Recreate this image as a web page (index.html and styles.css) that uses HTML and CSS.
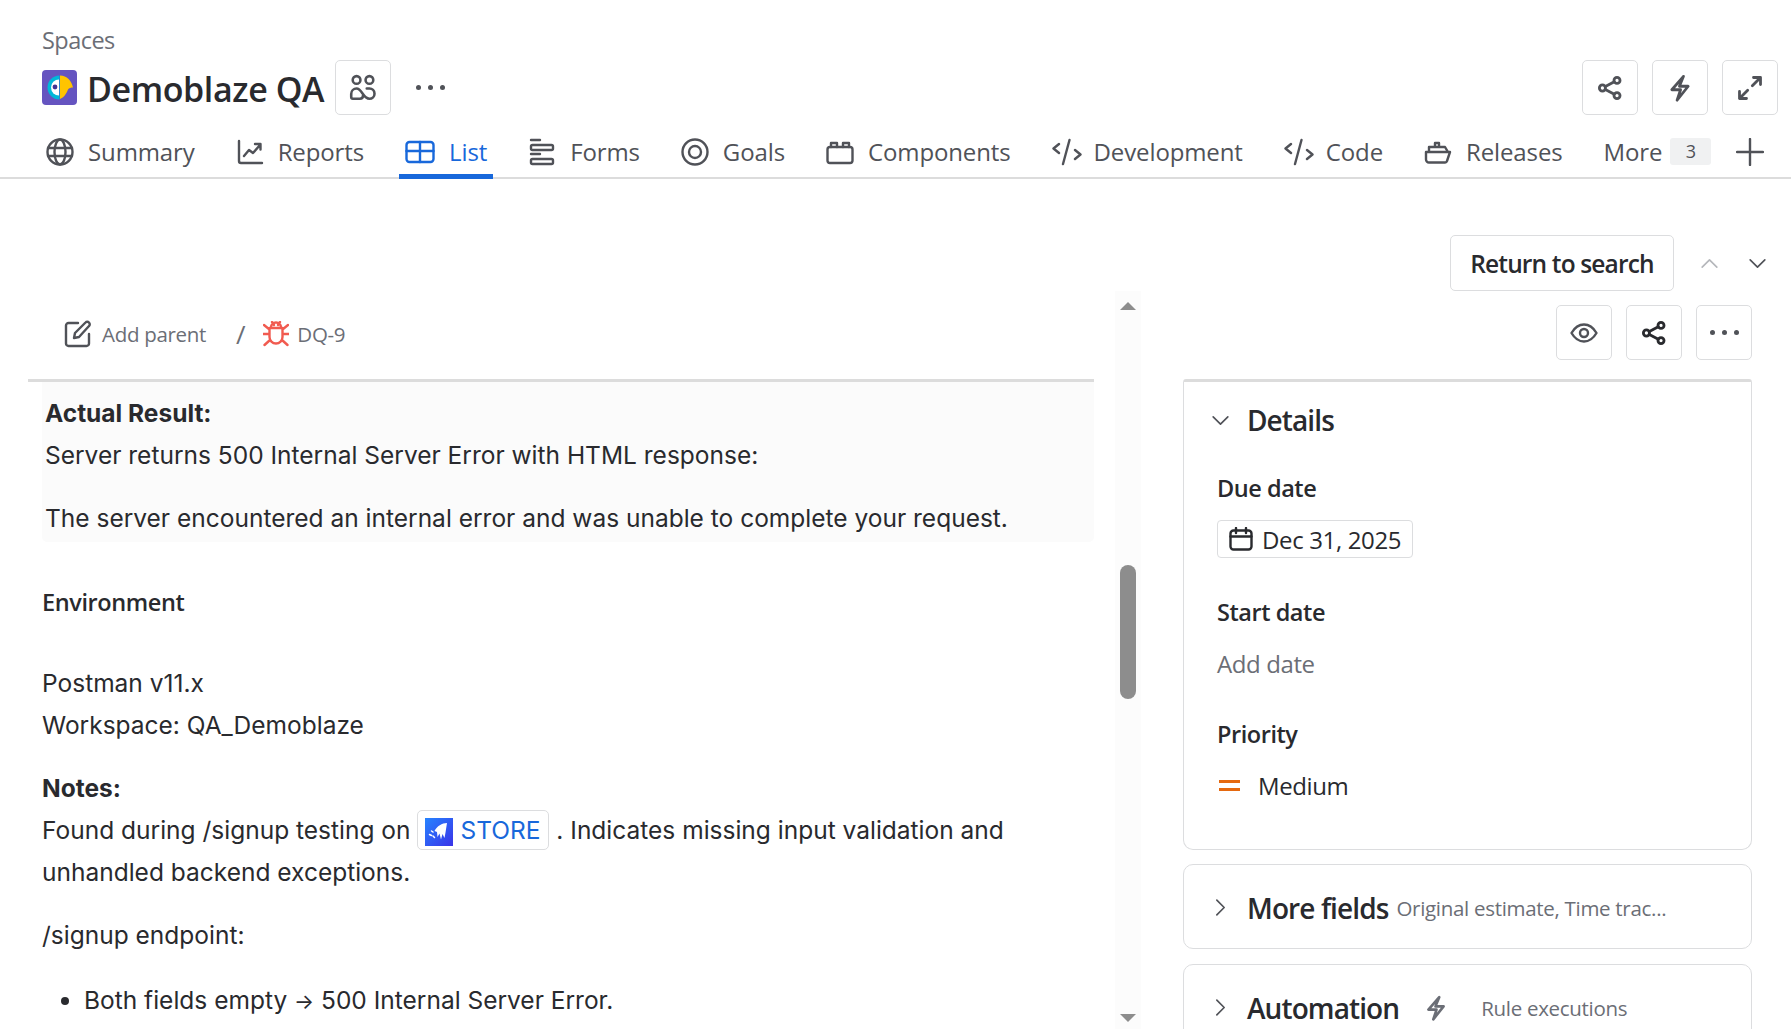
FILE: index.html
```html
<!DOCTYPE html>
<html lang="en">
<head>
  <meta charset="UTF-8" />
  <meta name="viewport" content="width=device-width, initial-scale=1.0"/>
  <title>Demoblaze QA</title>
  <link rel="stylesheet" href="styles.css">
</head>
<body>
  <svg class="defs" width="0" height="0">
    <symbol id="i-share" viewBox="0 0 24 24"><circle cx="5.5" cy="12" r="2.600"/><circle cx="18" cy="5.5" r="2.600"/><circle cx="18" cy="18.5" r="2.600"/><path d="M8 10.700l7.700-4M8 13.300l7.700 4"/></symbol>
    <symbol id="i-bolt" viewBox="0 0 24 24"><path d="M15 2L5 13.500h7.500L9.500 22.500 19 10.500h-7.500z"/></symbol>
  </svg>

  <header class="top">
    <div class="crumb">Spaces</div>
    <div class="title-row">
      <svg class="logo" viewBox="0 0 35 35">
        <rect width="35" height="35" rx="4" fill="#6554c0"/>
        <path d="M17.500 5.500a12 12 0 0 0 0 24z" fill="#00b8d9"/>
        <path d="M17 9.500a8 8 0 0 0 0 16z" fill="#fff"/>
        <circle cx="13" cy="17" r="2.400" fill="#403294"/>
        <path d="M18 5.500c7 0 11.500 5 13 12-2 0-4 .5-5 2-1.500 4-4 8-8 9.500z" fill="#ffc400"/>
      </svg>
      <h1>Demoblaze QA</h1>
      <button class="icon-btn people">
        <svg viewBox="0 0 28 28"><circle cx="8" cy="6.500" r="3.600"/><circle cx="20" cy="6.500" r="3.600"/><path d="M8 14.500a5 5 0 0 0-5 5v3a1.500 1.500 0 0 0 1.500 1.500h6.500c2 0 3-1.500 3-3M8 14.500c5 0 6 9.500 12 9.500a4.750 4.750 0 0 0 0-9.500h-2.500"/></svg>
      </button>
      <div class="dots"><i></i><i></i><i></i></div>
      <div class="title-actions">
        <button class="icon-btn"><svg viewBox="0 0 24 24"><use href="#i-share"/></svg></button>
        <button class="icon-btn"><svg viewBox="0 0 24 24"><use href="#i-bolt"/></svg></button>
        <button class="icon-btn"><svg viewBox="0 0 24 24"><path d="M14 10l7-7M15 3h6v6M10 14l-7 7M3 15v6h6"/></svg></button>
      </div>
    </div>
    <nav class="tabs">
      <a class="tab"><svg viewBox="0 0 28 28"><circle cx="14" cy="14" r="12.500"/><ellipse cx="14" cy="14" rx="5.500" ry="12.500"/><path d="M2 10h24M2 18h24"/></svg>Summary</a>
      <a class="tab"><svg viewBox="0 0 28 28"><path d="M3 3v20a2 2 0 0 0 2 2h21M8 18l5-6 4 3 7-8M19 6h5.500v5.500"/></svg>Reports</a>
      <a class="tab active"><svg class="wide" viewBox="0 0 30 28"><rect x="1.500" y="4" width="27" height="20" rx="3"/><path d="M1.500 13h27M15 4v20"/></svg>List</a>
      <a class="tab"><svg viewBox="0 0 28 28"><path d="M3 2h9"/><rect x="3" y="7" width="22" height="5" rx="1.500"/><path d="M3 16h9"/><rect x="3" y="21" width="22" height="5" rx="1.500"/></svg>Forms</a>
      <a class="tab"><svg viewBox="0 0 28 28"><circle cx="14" cy="14" r="12.500"/><circle cx="14" cy="14" r="6"/></svg>Goals</a>
      <a class="tab"><svg viewBox="0 0 28 28"><rect x="1.500" y="9" width="25" height="16" rx="2.500"/><path d="M5 9V5h6v4M17 9V5h6v4"/></svg>Components</a>
      <a class="tab code"><svg class="wide" viewBox="0 0 30 28"><path d="M7 6L1.500 10.500 7 15M23 12l5.500 4.500L23 21M17.500 2L11 26"/></svg>Development</a>
      <a class="tab code"><svg class="wide" viewBox="0 0 30 28"><path d="M7 6L1.500 10.500 7 15M23 12l5.500 4.500L23 21M17.500 2L11 26"/></svg>Code</a>
      <a class="tab"><svg viewBox="0 0 28 28"><path d="M2 14h24l-3 9a2 2 0 0 1-2 1.500H5a3 3 0 0 1-3-3zM5 14V9h16l3 5M11 9V5h4v4"/></svg>Releases</a>
      <a class="tab more">More<span class="count">3</span></a>
      <a class="plus"><svg viewBox="0 0 28 28"><path d="M14 1v26M1 14h26"/></svg></a>
    </nav>
  </header>

  <div class="issue-bar">
    <button class="return-btn">Return to search</button>
    <svg class="chev up" viewBox="0 0 20 12"><path d="M2 10l8-8 8 8"/></svg>
    <svg class="chev" viewBox="0 0 20 12"><path d="M2 2l8 8 8-8"/></svg>
  </div>

  <main class="issue">
    <section class="issue-main">
      <div class="issue-crumbs">
        <svg class="edit" viewBox="0 0 28 28"><path d="M14 3H4.500A2.500 2.500 0 0 0 2 5.500v18A2.500 2.500 0 0 0 4.500 26h18a2.500 2.500 0 0 0 2.500-2.500V14"/><path d="M10 18l1-5L21.500 2.500a2.400 2.400 0 0 1 3.500 0 2.400 2.400 0 0 1 0 3.500L15 17z"/></svg>
        <span>Add parent</span>
        <span class="slash">/</span>
        <svg class="bug" viewBox="0 0 26 26"><path d="M8 6.500a5 5 0 0 1 10 0M6.500 7h13v9a6.500 6.500 0 0 1-13 0zM9 1l2 3M17 1l-2 3M1 4l5.500 4.500M25 4l-5.500 4.500M0.500 13h6M25.500 13h-6M1.500 24l5.500-5M24.500 24l-5.500-5"/></svg>
        <span>DQ-9</span>
      </div>
      <div class="content">
        <div class="panel">
          <p><strong>Actual Result:</strong><br>Server returns 500 Internal Server Error with HTML response:</p>
          <p>The server encountered an internal error and was unable to complete your request.</p>
        </div>
        <h2>Environment</h2>
        <p>Postman v11.x<br>Workspace: QA_Demoblaze</p>
        <p><strong>Notes:</strong><br>Found during /signup testing on
          <a class="chip"><svg viewBox="0 0 28 28"><defs><linearGradient id="store" x1="0" y1="0" x2="1" y2="1"><stop offset="0" stop-color="#2684ff"/><stop offset="1" stop-color="#3a33e8"/></linearGradient></defs><rect width="28" height="28" fill="url(#store)"/><path d="M22 5c-5 0-10 3-12.500 8l2.500 1 .5 5 2-3.500 1.500 6 1.500-5.500 2 4 1-5.500z" fill="#fff"/><path d="M6.500 13l1.500 1M4.500 16.500l2 1M8 18l1.500 1.500" stroke="#fff" stroke-width="1.500"/></svg>STORE</a>
          . Indicates missing input validation and<br>unhandled backend exceptions.</p>
        <p>/signup endpoint:</p>
        <ul>
          <li>Both fields empty <span class="to">→</span> 500 Internal Server Error.</li>
        </ul>
      </div>
    </section>

    <div class="scroll">
      <span class="arrow up-arrow"></span>
      <span class="thumb"></span>
      <span class="arrow down-arrow"></span>
    </div>

    <aside class="issue-side">
      <div class="side-actions">
        <button class="icon-btn"><svg viewBox="0 0 28 28"><path d="M1.500 14C5 8 9 5.500 14 5.500S23 8 26.500 14C23 20 19 22.500 14 22.500S5 20 1.500 14z"/><circle cx="14" cy="14" r="4"/></svg></button>
        <button class="icon-btn dark"><svg viewBox="0 0 24 24"><use href="#i-share"/></svg></button>
        <button class="icon-btn"><div class="dots"><i></i><i></i><i></i></div></button>
      </div>

      <div class="card details">
        <div class="card-head">
          <svg class="fold" viewBox="0 0 20 12"><path d="M2 2l8 8 8-8"/></svg>
          <h3>Details</h3>
        </div>
        <div class="field">
          <label>Due date</label>
          <div class="date"><svg viewBox="0 0 24 24"><rect x="1.500" y="3.500" width="21" height="19" rx="3"/><path d="M1.500 9.500h21M7 1v5M17 1v5"/></svg>Dec 31, 2025</div>
        </div>
        <div class="field">
          <label>Start date</label>
          <div class="value muted">Add date</div>
        </div>
        <div class="field">
          <label>Priority</label>
          <div class="value"><span class="prio"></span>Medium</div>
        </div>
      </div>

      <div class="card fold-card">
        <svg class="fold right" viewBox="0 0 12 20"><path d="M2 2l8 8-8 8"/></svg>
        <h3>More fields</h3>
        <span class="hint">Original estimate, Time trac...</span>
      </div>

      <div class="card fold-card auto">
        <svg class="fold right" viewBox="0 0 12 20"><path d="M2 2l8 8-8 8"/></svg>
        <h3>Automation</h3>
        <svg class="auto-bolt" viewBox="0 0 24 24"><use href="#i-bolt"/></svg>
        <span class="hint">Rule executions</span>
      </div>
    </aside>
  </main>
</body>
</html>
```

FILE: styles.css
```css
html, body {
  height: 100%;
}
body {
  margin: 0;
  height: 1029px;
  overflow: hidden;
  background: #fff;
  color: #292a2e;
  font-family: 'Open Sans', 'Noto Sans', sans-serif;
}
.defs {
  position: absolute;
}
svg {
  fill: none;
  stroke: currentColor;
  stroke-width: 2.4;
  stroke-linecap: round;
  stroke-linejoin: round;
  display: block;
  flex-shrink: 0;
}
symbol {
  overflow: visible;
}
button {
  font-family: inherit;
  background: #fff;
  border: 1px solid #dcdddf;
  border-radius: 5px;
  padding: 0;
}

/* top header */
.top {
  padding-top: 24px;
  border-bottom: 2px solid #dcdcdc;
  height: 153px;
}
.crumb {
  padding-left: 42px;
  font-size: 23.5px;
  line-height: 32px;
  color: #6b6e76;
  letter-spacing: -0.55px;
}
.title-row {
  display: flex;
  align-items: center;
  height: 55px;
  margin-top: 4px;
  padding: 0 13px 0 42px;
}
.logo {
  width: 35px;
  height: 35px;
  stroke: none;
}
h1 {
  margin: 2px 11px 0 10px;
  font-size: 34px;
  font-weight: 600;
  letter-spacing: -0.4px;
  white-space: nowrap;
}
.icon-btn {
  width: 56px;
  height: 55px;
  color: #505258;
  display: flex;
  align-items: center;
  justify-content: center;
}
.icon-btn svg {
  width: 28px;
  height: 28px;
}
.icon-btn.dark {
  color: #292a2e;
}
.people svg {
  width: 30px;
  height: 30px;
}
.dots {
  display: flex;
  gap: 7px;
}
.dots i {
  width: 5px;
  height: 5px;
  border-radius: 50%;
  background: #505258;
}
.title-row > .dots {
  margin-left: 25px;
}
.title-actions {
  margin-left: auto;
  display: flex;
  gap: 14px;
}

/* tabs */
.tabs {
  display: flex;
  align-items: stretch;
  height: 64px;
  padding-left: 40px;
  gap: 29px;
}
.tab {
  display: flex;
  align-items: center;
  gap: 14px;
  box-sizing: border-box;
  height: 64px;
  padding: 14px 6px 0;
  font-size: 24px;
  letter-spacing: -0.12px;
  color: #505258;
  border-bottom: 5px solid transparent;
  white-space: nowrap;
}
.tab svg {
  width: 28px;
  height: 28px;
}
.tab svg.wide {
  width: 30px;
}
.tab.code {
  gap: 12px;
}
.tab.active {
  color: #1868db;
  border-bottom-color: #1868db;
}
.more {
  gap: 8px;
}
.count {
  background: #f0f1f2;
  border-radius: 3px;
  width: 41px;
  height: 27px;
  font-size: 18px;
  line-height: 27px;
  text-align: center;
  color: #505258;
}
.plus {
  display: flex;
  align-items: center;
  box-sizing: border-box;
  height: 59px;
  padding-top: 14px;
  color: #505258;
  margin-left: -10px;
}
.plus svg {
  width: 28px;
  height: 28px;
}

/* issue view */
.issue-bar {
  display: flex;
  align-items: center;
  padding-top: 56px;
  padding-left: 1450px;
}
.return-btn {
  width: 224px;
  height: 56px;
  font-size: 24.5px;
  font-weight: 600;
  color: #292a2e;
  letter-spacing: -0.85px;
}
.chev {
  width: 19px;
  height: 11px;
  color: #505258;
  margin-left: 29px;
  stroke-width: 1.8;
}
.chev.up {
  color: #b5b7bb;
  margin-left: 26px;
}
.issue {
  display: flex;
  align-items: stretch;
  height: 738px;
  overflow: hidden;
}
.issue-main {
  margin-left: 28px;
  width: 1066px;
  flex-shrink: 0;
}
.issue-crumbs {
  display: flex;
  align-items: center;
  height: 86px;
  padding-left: 36px;
  padding-bottom: 2px;
  border-bottom: 3px solid #dcdcdc;
  font-size: 20.5px;
  color: #6b6e76;
  letter-spacing: -0.3px;
}
.edit {
  width: 28px;
  height: 28px;
  color: #505258;
  margin-right: 10px;
}
.slash {
  margin: 0 18px 0 30px;
  font-size: 26px;
}
.bug {
  width: 26px;
  height: 26px;
  color: #f15b50;
  margin-right: 8px;
}
.content {
  font-family: Inter, sans-serif;
  font-size: 24.5px;
  line-height: 42px;
  color: #292a2e;
  padding-left: 14px;
}
.content p {
  margin: 0 0 21px;
}
.panel {
  background: #fbfbfb;
  border-radius: 0 0 5px 5px;
  padding: 10px 0 0 3px;
  height: 150px;
}
.content h2 {
  margin: 39px 0 39px;
  font-family: 'Open Sans', sans-serif;
  font-size: 23.5px;
  font-weight: 600;
  line-height: 42px;
  letter-spacing: -0.4px;
}
.chip {
  display: inline-block;
  box-sizing: border-box;
  height: 40px;
  line-height: 38px;
  padding: 0 8px 0 7px;
  border: 1px solid #dcdddf;
  border-radius: 5px;
  color: #1868db;
}
.chip svg {
  display: inline-block;
  width: 28px;
  height: 28px;
  margin-right: 7px;
  vertical-align: -7px;
  stroke: none;
}
.content ul {
  margin: 23px 0 0;
  padding-left: 42px;
}
.to {
  font-size: 21px;
}

/* fake scrollbar */
.scroll {
  position: relative;
  margin-left: 21px;
  width: 26px;
  flex-shrink: 0;
  background: #fcfcfc;
}
.arrow {
  position: absolute;
  left: 5px;
  width: 0;
  height: 0;
  border-left: 8px solid transparent;
  border-right: 8px solid transparent;
}
.up-arrow {
  top: 11px;
  border-bottom: 8px solid #8d8d8d;
}
.down-arrow {
  bottom: 7px;
  border-top: 8px solid #8d8d8d;
}
.thumb {
  position: absolute;
  left: 5px;
  top: 274px;
  width: 16px;
  height: 134px;
  border-radius: 8px;
  background: #8d8d8d;
}

/* right side */
.issue-side {
  margin-left: 42px;
  width: 569px;
  flex-shrink: 0;
}
.side-actions {
  display: flex;
  justify-content: flex-end;
  gap: 14px;
  margin-top: 14px;
  height: 56px;
  margin-bottom: 18px;
}
.card {
  border: 1px solid #dcdddf;
  border-radius: 10px;
  box-sizing: border-box;
  margin-bottom: 15px;
}
.details {
  height: 471px;
  margin-bottom: 14px;
  border-top: 3px solid #dcdcdc;
  border-radius: 3px 3px 10px 10px;
  padding: 0 0 0 33px;
}
.card-head {
  display: flex;
  align-items: center;
  margin: 0 0 14px -6px;
  height: 76px;
}
.fold {
  width: 19px;
  height: 11px;
  color: #505258;
  stroke-width: 1.8;
}
.fold.right {
  width: 11px;
  height: 19px;
  position: absolute;
  margin-left: 31px;
}
h3 {
  margin: 0;
  font-size: 28px;
  font-weight: 600;
  letter-spacing: -0.9px;
}
.card-head h3 {
  margin-left: 9px;
  padding-left: 8px;
}
.field {
  margin-bottom: 38px;
}
.field label {
  display: block;
  font-size: 23.5px;
  font-weight: 600;
  letter-spacing: -0.45px;
  line-height: 32px;
}
.date {
  display: inline-flex;
  align-items: center;
  gap: 9px;
  box-sizing: border-box;
  margin-top: 16px;
  height: 38px;
  padding: 0 11px 0 11px;
  border: 1px solid #dcdddf;
  border-radius: 4px;
  font-size: 24px;
  letter-spacing: -0.35px;
  color: #292a2e;
}
.date svg {
  width: 24px;
  height: 24px;
}
.value {
  display: flex;
  align-items: center;
  margin-top: 18px;
  height: 34px;
  font-size: 24px;
  letter-spacing: -0.4px;
}
.muted {
  color: #6b6e76;
}
.prio {
  width: 21px;
  height: 11px;
  border-top: 3px solid #e56910;
  border-bottom: 3px solid #e56910;
  box-sizing: border-box;
  margin: 0 18px 0 2px;
}
.fold-card {
  display: flex;
  align-items: center;
  height: 85px;
  padding: 2px 0 0 63px;
  position: relative;
}
.fold-card .fold {
  left: 0;
  top: 33px;
}
.fold-card h3 {
  white-space: nowrap;
}
.hint {
  font-size: 20.5px;
  color: #6b6e76;
  margin-left: 8px;
  letter-spacing: -0.3px;
  white-space: nowrap;
}
.auto {
  height: 85px;
}
.auto-bolt {
  width: 26px;
  height: 30px;
  color: #6b6e76;
  margin-left: 24px;
}
.auto .hint {
  margin-left: 32px;
}
```
